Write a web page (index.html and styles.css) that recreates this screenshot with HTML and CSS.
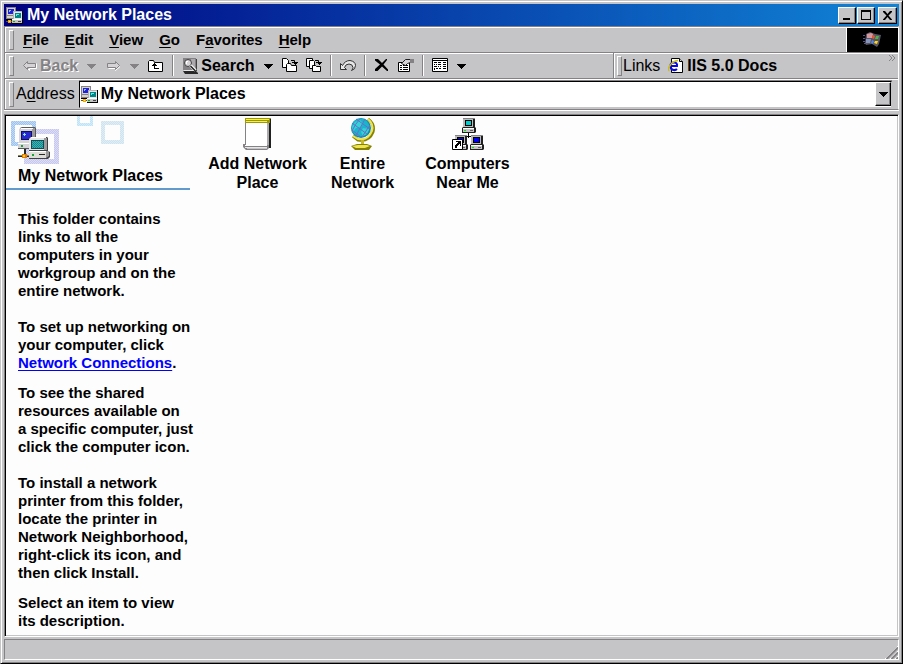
FILE: index.html
```html
<!DOCTYPE html>
<html lang="en">
<head>
<meta charset="utf-8">
<title>My Network Places</title>
<link rel="stylesheet" href="styles.css">
</head>
<body>
<svg class="defs" aria-hidden="true">
  <defs>
    <pattern id="dots" width="2" height="2" patternUnits="userSpaceOnUse">
      <path d="M0 0h1v1H0zM1 1h1v1H1z" fill="#fff" fill-opacity=".4"/>
    </pattern>
    <pattern id="teal" width="2" height="2" patternUnits="userSpaceOnUse">
      <path d="M0 0h2v2H0z" fill="#18848c"/><path d="M0 0h1v1H0zM1 1h1v1H1z" fill="#39b5b5"/>
    </pattern>
  </defs>
  <symbol id="net16" viewBox="0 0 17 17">
    <path d="M0 0h10v9H0z" fill="#848284"/><path d="M1 1h8v7H1z" fill="#d6d3ce"/>
    <path d="M2 2h6v5H2z" fill="#2121d6"/><path d="M3 3h2v1H3zM3 4h1v1H3z" fill="#8cc6ff"/>
    <path d="M0 9h8v4H0z" fill="#848284"/><path d="M1 9h6v2H1z" fill="#d6d3ce"/><path d="M0 12h7v1H0z" fill="#000"/>
    <path d="M0 14h7v1H0z" fill="#636100"/><path d="M2 13h3v3H2z" fill="#ffa500"/><path d="M3 14h1v1H3z" fill="#ffef63"/>
    <path d="M7 4h10v9H7z" fill="#000"/><path d="M7 4h9v8H7z" fill="#b5b2b5"/><path d="M8 5h8v7H8z" fill="#e7e7e7"/>
    <path d="M9 6h6v5H9z" fill="#008484"/><path d="M10 7h3v1h-3zM10 8h1v1h-1z" fill="#63e7e7"/>
    <path d="M6 12h11v5H6z" fill="#000"/><path d="M6 12h10v4H6z" fill="#c6c3c6"/><path d="M6 12h10v1H6z" fill="#fff"/>
    <path d="M7 14h2v1H7z" fill="#00b500"/><path d="M12 14h3v1h-3z" fill="#424142"/>
  </symbol>
  <symbol id="down" viewBox="0 0 11 16">
    <path d="M1 6h9v1H1zM2 7h7v1H2zM3 8h5v1H3zM4 9h3v1H4zM5 10h1v1H5z" fill="currentColor"/>
  </symbol>
  <symbol id="pc" viewBox="0 0 14 15">
    <path d="M1 0h11l1 1v8l1 1v4l-1 1H0v-5l1-1z" fill="#212021"/>
    <path d="M1 1h10v8H1z" fill="#bdbabd"/><path d="M1 0h11v1H1z" fill="#848284"/>
    <path d="M1 10h11v4H1z" fill="#c6c3c6"/><path d="M1 10h11v1H1z" fill="#fff"/>
    <path d="M3 2h7v6H3z" fill="#000"/><path d="M4 3h5v4H4z" fill="currentColor"/>
    <path d="M2 12h2v1H2z" fill="#00e700"/><path d="M8 12h3v1H8z" fill="#636163"/>
  </symbol>
</svg>

<div class="window">
  <header class="titlebar">
    <svg class="icon net" aria-hidden="true"><use href="#net16"/></svg>
    <h1>My Network Places</h1>
    <div class="controls">
      <button type="button" aria-label="Minimize"><svg viewBox="0 0 16 14"><path d="M4 10h7v2H4z"/></svg></button>
      <button type="button" aria-label="Maximize"><svg viewBox="0 0 16 14"><path d="M3 2h10v10H3zM4 4v7h8V4z" fill-rule="evenodd"/></svg></button>
      <button type="button" class="close" aria-label="Close"><svg viewBox="0 0 16 14"><path d="M4 3h2l2.500 3L11 3h2v1L9.500 7.500l3.500 4v.500h-2L8.500 9 6 12H4v-.500l3.500-4L4 4z"/></svg></button>
    </div>
  </header>

  <div class="rebar">
    <div class="band menuband">
      <nav class="menu grip" aria-label="Menu">
        <button type="button"><u>F</u>ile</button>
        <button type="button"><u>E</u>dit</button>
        <button type="button"><u>V</u>iew</button>
        <button type="button"><u>G</u>o</button>
        <button type="button">F<u>a</u>vorites</button>
        <button type="button"><u>H</u>elp</button>
      </nav>
      <div class="brand">
        <svg viewBox="0 0 20 18" aria-hidden="true">
          <path d="M0 4h2v1H0zM0 7h2v1H0zM0 10h2v1H0zM1 12h3v1H1z" fill="#52519c"/>
          <path d="M3 3l4-2 5 2 6 1-2 9-2 3-5-3-6 1-1-2z" fill="#5a5563"/>
          <path d="M4 3l4-1 2 1-1 4-5 0z" fill="#d69a9c"/><path d="M3 8h5l-1 4-4 0z" fill="#8496bd"/>
          <path d="M10 4l2 1-1 3-2-1z" fill="#f75129"/><path d="M13 5h3l-1 3-3 0z" fill="#4ab54a"/>
          <path d="M9 9l2 1-1 3-2-1z" fill="#4a86e7"/><path d="M12 10l3 0-1 3-3-1z" fill="#ffd718"/>
        </svg>
      </div>
    </div>

    <div class="band">
      <div class="toolbar grip">
        <button type="button" class="tool" disabled>
          <svg class="arrow" viewBox="0 0 14 16" aria-hidden="true"><path d="M2.500 8.500l4 4v-2h7v-5" fill="none" stroke="#fff"/><path d="M.5 7.500l4-4v2h8v4h-8v2z" fill="#d6d3d6" stroke="#848284"/></svg>
          <span>Back</span>
        </button>
        <button type="button" class="tool" disabled aria-label="Back list"><svg class="down"><use href="#down"/></svg></button>
        <button type="button" class="tool" disabled aria-label="Forward"><svg class="icon" viewBox="0 0 16 16"><path d="M15 8.500l-4.500 4v-2h-7" fill="none" stroke="#fff"/><path d="M14.500 7.500l-4-4v2h-8v4h8v2z" fill="#d6d3d6" stroke="#848284"/></svg></button>
        <button type="button" class="tool" disabled aria-label="Forward list"><svg class="down"><use href="#down"/></svg></button>
        <button type="button" class="tool" aria-label="Up"><svg class="icon" viewBox="0 0 16 16"><path d="M.5 13.500v-10l1-1h4l1 2h8v9z" fill="#fff" stroke="#000"/><path d="M6 5h1v1h1v1h1v1H7v2h4v1H6V8H4V7h1V6h1z"/></svg></button>
        <span class="sep"></span>
        <button type="button" class="tool">
          <svg class="icon" viewBox="0 0 16 16" aria-hidden="true"><path d="M1 0h13v12H1z" fill="#848284"/><path d="M9 1h4v10H9z" fill="#adaaad"/><path d="M14 1h1v12h-1zM2 12h3v1H2z" fill="#424142"/><path d="M1 13h13l2 2v1H3z" fill="#292829"/><path d="M2 12h10v1H2z" fill="#e7e7e7"/><circle cx="6" cy="5" r="3.500" fill="#d6d3d6" stroke="#424142"/><path d="M4 3h2v1H4zM4 4h1v2H4z" fill="#fff"/><path d="M8.500 7.500l5 5" stroke="#fff" stroke-width="3"/><path d="M8.500 8l5 5" stroke="#212021" stroke-width="1.500"/></svg>
          <span>Search</span>
        </button>
        <button type="button" class="tool" aria-label="Search list"><svg class="down"><use href="#down"/></svg></button>
        <button type="button" class="tool" aria-label="Move To"><svg class="icon" viewBox="0 0 16 16"><path d="M.5.500h4l2 2v7h-6z" fill="#fff" stroke="#000"/><path d="M4.500 13.500v-7l1-1h3l1 2h5v6z" fill="#fff" stroke="#000"/><path d="M9 2.500h3.500v2" fill="none" stroke="#000"/><path d="M10 4h6v1h-1v1h-1v1h-1V6h-1V5h-2z"/></svg></button>
        <button type="button" class="tool" aria-label="Copy To"><svg class="icon" viewBox="0 0 16 16"><path d="M.5.500h6v8h-6z" fill="#fff" stroke="#000"/><path d="M3.500 2.500h4l1 1v7h-5z" fill="#fff" stroke="#000"/><path d="M6.500 13.500v-6h3l1 1h4v5z" fill="#fff" stroke="#000"/><path d="M9 2.500h3.500v2" fill="none" stroke="#000"/><path d="M10 4h6v1h-1v1h-1v1h-1V6h-1V5h-2z"/></svg></button>
        <span class="sep"></span>
        <button type="button" class="tool" aria-label="Undo"><svg class="icon" viewBox="0 0 16 16"><path d="M.5 5.500v6h6L4.500 9.500q1-3.500 4.500-3.500t4 3.500q0 1.500-1.500 3 4-1 4-5T10 2.500Q5 2.500 2.500 7.500z" fill="#e7e7e7" stroke="#313031"/></svg></button>
        <span class="sep"></span>
        <button type="button" class="tool" aria-label="Delete"><svg class="icon" viewBox="0 0 16 16"><path d="M1 1h3l4 4 4-4h1v1L9.500 6.500l4.500 5v1.500h-1L8 8.500 3.500 13H1v-2l5-4.500-5-4z"/></svg></button>
        <button type="button" class="tool" aria-label="Properties"><svg class="icon" viewBox="0 0 16 16"><path d="M.5 4.500h11v9H.500z" fill="#fff" stroke="#000"/><path d="M2 7h2v1H2zM5 7h5v1H5zM2 9h2v1H2zM5 9h5v1H5zM2 11h2v1H2zM5 11h5v1H5z"/><path d="M3.500 5.500l4-4h5v3l-3 1-2 2z" fill="#d6d3d6" stroke="#212021"/><path d="M12 1h4v4h-4z" fill="#848284"/></svg></button>
        <span class="sep"></span>
        <button type="button" class="tool" aria-label="Views"><svg class="icon" viewBox="0 0 16 16"><path d="M.5.500h15v13H.500z" fill="#fff" stroke="#000"/><path d="M1 2h14v1H1z"/><path d="M2 4h3v1H2zM6 4h3v1H6zM11 4h3v1h-3zM2 6h1v1H2zM4 6h1v1H4zM6 6h3v1H6zM11 6h3v1h-3zM2 8h3v1H2zM6 8h1v1H6zM8 8h1v1H8zM11 8h3v1h-3zM2 10h1v2H2zM4 10h2v1H4zM7 10h2v1H7zM11 10h3v1h-3z"/></svg></button>
        <button type="button" class="tool" aria-label="Views list"><svg class="down"><use href="#down"/></svg></button>
      </div>
      <div class="links grip">
        <span>Links</span>
        <a href="#iis">
          <svg class="icon" viewBox="0 0 16 16" aria-hidden="true"><path d="M3.500.500h8l3 3v11h-11z" fill="#fff" stroke="#000"/><path d="M11.500.500v3h3" fill="#d6d3d6" stroke="#000"/><path d="M9 11Q7.500 12.500 5.500 12 2.500 11.500 2.500 8T6 4.500 9 8H3.500" fill="none" stroke="#0808de" stroke-width="2"/><path d="M1.500 12.500Q-1 12 2 7.500T10 2.500" fill="none" stroke="#cebe10" stroke-width="1.500"/></svg>
          IIS 5.0 Docs
        </a>
        <svg class="more" viewBox="0 0 8 7" aria-hidden="true"><path d="M1 0l3 3-3 3M4 0l3 3-3 3" fill="none" stroke="#848284"/></svg>
      </div>
    </div>

    <div class="band addressband">
      <div class="address grip">
        <label for="addr">A<u>d</u>dress</label>
        <div class="combo">
          <svg class="icon net" aria-hidden="true"><use href="#net16"/></svg>
          <input id="addr" type="text" value="My Network Places">
          <button type="button" aria-label="Show addresses"><svg class="down"><use href="#down"/></svg></button>
        </div>
      </div>
    </div>
  </div>

  <main class="client">
    <aside class="info">
      <div class="banner">
        <svg class="art" viewBox="0 0 184 50" aria-hidden="true">
          <g fill="none">
            <path d="M7 7h21v21H7z" stroke="#9cc3ef" stroke-width="4"/>
            <path d="M20.500 15.500h30v30h-30z" stroke="#c6c7ef" stroke-width="5"/>
            <path d="M72.500-4v12.500h13V-4" stroke="#bde3f7" stroke-width="3"/>
            <path d="M97 7h19v19H97z" stroke="#cee3ef" stroke-width="4"/>
            <g stroke="url(#dots)"><path d="M7 7h21v21H7zM97 7h19v19H97z" stroke-width="4"/><path d="M20.500 15.500h30v30h-30z" stroke-width="5"/><path d="M72.500-4v12.500h13V-4" stroke-width="3"/></g>
          </g>
          <g transform="translate(12 11)">
            <path d="M2 1l2-1h13l1 1v15h-2v6H0v-5l2-2z" fill="#5a595a"/>
            <path d="M1 2l2-1h11v15H1z" fill="#d6d3d6"/><path d="M14 1h3v14h-3z" fill="#9c9a9c"/><path d="M3 1h12v1H3z" fill="#fff"/>
            <path d="M3 4h11v9H3z" fill="#101063"/><path d="M4 5h9v7H4z" fill="#2928ce"/><path d="M6 6h1v3H6zM5 7h3v1H5z" fill="#8cdfff"/>
            <path d="M0 17h13v4H0z" fill="#d6d3d6"/><path d="M0 16h12v1H0z" fill="#fff"/><path d="M3 18h2v2H3z" fill="#18a639"/>
            <path d="M6 22h2v5H6zM0 29h12v1H0z" fill="#292829"/><path d="M0 28h12v1H0z" fill="#8c8a52"/><path d="M4 27h5v4H4z" fill="#e77900"/><path d="M5 28h2v2H5z" fill="#ffcf39"/>
            <path d="M11 11l2-1h16l1 1v13l2 1v5l-2 2H11z" fill="#424142"/>
            <path d="M11 12l2-2h13v13H11z" fill="#e7e7e7"/><path d="M26 11h3v12h-3z" fill="#9c9a9c"/><path d="M13 10h15v1H13z" fill="#fff"/>
            <path d="M13 13h13v9H13z" fill="#104d52"/><path d="M14 14h11v7H14z" fill="url(#teal)"/>
            <path d="M11 24h17v7H11z" fill="#deded6"/><path d="M28 24h3v5l-3 2z" fill="#9c9a9c"/><path d="M11 24h17v1H11z" fill="#fff"/>
            <path d="M14 27h2v2h-2z" fill="#18a639"/><path d="M21 27h6v1h-6z" fill="#292829"/>
          </g>
        </svg>
        <h2>My Network Places</h2>
      </div>
      <div class="text">
        <p>This folder contains<br>links to all the<br>computers in your<br>workgroup and on the<br>entire network.<br><br>To set up networking on<br>your computer, click<br><a href="#connections">Network Connections</a>.</p>
        <p>To see the shared<br>resources available on<br>a specific computer, just<br>click the computer icon.<br><br>To install a network<br>printer from this folder,<br>locate the printer in<br>Network Neighborhood,<br>right-click its icon, and<br>then click Install.</p>
        <p>Select an item to view<br>its description.</p>
      </div>
    </aside>
    <ul class="items">
      <li>
        <svg viewBox="0 0 32 32" aria-hidden="true">
          <path d="M3 0h26v30H3z" fill="#848284"/><path d="M27 1h2v29h-2z" fill="#212021"/>
          <path d="M4 4h21v24H4z" fill="#fff"/><path d="M3 0h25v5H3z" fill="#9c9a00"/><path d="M4 1h23v1H4zM4 3h21v1H4z" fill="#f7ef52"/>
          <path d="M25 5h2v22h-2z" fill="#adaaad"/><path d="M1 26h2v1h24v3l-2 2H4l-3-3z" fill="#848284"/><path d="M3 27h22v1H3z" fill="#fff"/><path d="M3 29h22v1H3z" fill="#e7e7e7"/><path d="M5 30h20v1H5z" fill="#c6c3c6"/>
        </svg>
        <span>Add Network<br>Place</span>
      </li>
      <li>
        <svg viewBox="0 0 32 32" aria-hidden="true">
          <path d="M21 1Q28 6 26 14 22 24 11 22L6 18" fill="none" stroke="#848200" stroke-width="3"/><path d="M21 1Q27 6 25 13 21 23 11 21L6 18" fill="none" stroke="#efe352" stroke-width="2"/>
          <circle cx="14" cy="10" r="10" fill="#108aa5"/><circle cx="13.500" cy="9.500" r="9" fill="#18b6ce"/>
          <path d="M8 4l5-2 3 3-2 4-5 1-3 4-1-5zM16 10l6 1-2 5-4 2-2-4z" fill="#31d3d6"/>
          <path d="M5 5l15 11M9 1l14 10M5 12l9 7M9 18Q13 10 18 1M5 13Q8 6 13 1M15 19l8-12" fill="none" stroke="#6b6dc6"/>
          <path d="M14 22h3v5h-3z" fill="#c6b629"/><path d="M4 28l6-2h10l5 2-3 4H8z" fill="#848200"/><path d="M5 28l6-1h9l3 1-5 2H9z" fill="#efe352"/>
        </svg>
        <span>Entire<br>Network</span>
      </li>
      <li>
        <svg viewBox="0 0 32 32" aria-hidden="true">
          <path d="M16 14h1v4h6v1h-6v1h-1v-1h-6v-1h6z" fill="#000"/>
          <use class="cyan" href="#pc" x="10" y="0" width="14" height="15"/>
          <use class="blue" href="#pc" x="2" y="17" width="14" height="15"/>
          <use class="blue" href="#pc" x="18" y="17" width="14" height="15"/>
          <path d="M.5 21.500h10v10H.500z" fill="#fff" stroke="#000"/><path d="M4 23h5v5H8v-2H7v1H6v1H5v2H3v-3h1v-1h1v-1h1v-1H4z"/>
        </svg>
        <span>Computers<br>Near Me</span>
      </li>
    </ul>
  </main>

  <footer class="status">
    <svg viewBox="0 0 14 14" aria-hidden="true"><path d="M1 14L14 1M6 14l8-8M11 14l3-3" stroke="#fff"/><path d="M2.500 14L14 2.500M7.500 14L14 7.500M12.500 14l1.500-1.500" stroke="#848284" stroke-width="2"/></svg>
  </footer>
</div>
</body>
</html>
```
FILE: styles.css
```css
:root {
  --face: #c5c4c7;
  --shade: #848284;
  --light: #fff;
}

* { box-sizing: border-box; }

body {
  margin: 0;
  font: bold 16px/20px "Liberation Sans", Arial, sans-serif;
  color: #000;
}

button, input {
  margin: 0;
  padding: 0;
  border: 0;
  background: none;
  color: inherit;
  font: inherit;
}

h1, h2, p, ul { margin: 0; padding: 0; font: inherit; list-style: none; }

svg { display: block; flex: none; }
u { text-underline-offset: 2px; }

.defs { position: absolute; width: 0; height: 0; }
.icon { width: 16px; height: 16px; }
.icon.net { width: 17px; height: 17px; }
.down { width: 11px; height: 16px; }

.window {
  display: flex;
  flex-direction: column;
  min-height: 100vh;
  padding: 2px;
  background: var(--face);
  border: 1px solid;
  border-color: var(--face) #000 #000 var(--face);
  box-shadow: inset 1px 1px var(--light), inset -1px -1px var(--shade);
}

.titlebar {
  display: flex;
  align-items: center;
  gap: 4px;
  height: 22px;
  margin: 1px 1px 0;
  padding: 0 2px;
  background: linear-gradient(90deg, #000080, #1084d6);
  color: #fff;
}
.titlebar h1 { flex: 1; }
.controls { display: flex; }
.controls button {
  width: 18px;
  height: 17px;
  background: var(--face);
  border: 1px solid;
  border-color: #fff #000 #000 #fff;
  box-shadow: inset -1px -1px var(--shade);
}
.controls svg { width: 16px; height: 14px; }
.controls button + button { margin-left: 1px; }
.controls .close { margin-left: 3px; width: 19px; }

.rebar {
  margin: 0 1px;
  border: 1px solid var(--shade);
  border-right-color: var(--light);
  box-shadow: 0 1px var(--light);
}
.band {
  display: flex;
  height: 26px;
  border-bottom: 1px solid var(--shade);
  box-shadow: inset 1px 1px var(--light);
}
.addressband { height: 30px; border-bottom: 0; }

.grip { display: flex; align-items: center; padding-left: 18px; position: relative; }
.grip::before {
  content: "";
  position: absolute;
  left: 4px;
  top: 3px;
  bottom: 2px;
  width: 3px;
  border: 1px solid;
  border-color: var(--light) var(--shade) var(--shade) var(--light);
}

.menu { flex: 1; gap: 16px; font-size: 15px; }
.brand {
  display: flex;
  align-items: center;
  justify-content: center;
  width: 52px;
  margin-top: 1px;
  background: #000;
  border-left: 1px solid var(--light);
}
.brand svg { width: 20px; height: 18px; }

.toolbar { flex: 1; gap: 8px; }
.tool { display: flex; align-items: center; gap: 3px; }
.tool:disabled { color: var(--shade); text-shadow: 1px 1px #fff; }
.arrow { width: 14px; height: 16px; }
.sep {
  width: 2px;
  height: 21px;
  border-left: 1px solid var(--shade);
  border-right: 1px solid var(--light);
}
.links {
  flex: 0 1 285px;
  gap: 8px;
  padding-left: 9px;
  border-left: 1px solid var(--shade);
  box-shadow: inset 1px 1px var(--light);
}
.links::before { left: 3px; }
.links span, .address label { font-weight: normal; }
.links a { display: flex; align-items: center; gap: 3px; color: inherit; text-decoration: none; white-space: nowrap; }
.more { width: 8px; height: 7px; margin: 2px 2px 0 auto; align-self: flex-start; }

.address { flex: 1; gap: 4px; padding-left: 11px; }
.combo {
  display: flex;
  flex: 1;
  align-items: center;
  gap: 3px;
  height: 27px;
  margin-right: 6px;
  padding-left: 1px;
  background: #fff;
  border: 1px solid;
  border-color: #000 var(--face) var(--face) #000;
  box-shadow: 0 -1px var(--shade);
}
.combo input { flex: 1; min-width: 0; outline: 0; }
.combo button {
  display: flex;
  align-items: center;
  justify-content: center;
  width: 16px;
  height: 24px;
  background: var(--face);
  border: 1px solid;
  border-color: #fff #000 #000 #fff;
  box-shadow: inset -1px -1px var(--shade);
}

.client {
  display: flex;
  flex: 1;
  margin: 4px 1px 0;
  background: #fdfdfd;
  border: 1px solid;
  border-color: var(--shade) var(--light) var(--light) var(--shade);
  box-shadow: inset 1px 1px #000, inset -1px -1px var(--face);
  padding: 1px;
}
.info { width: 184px; white-space: nowrap; }
.banner { border-bottom: 2px solid #639ace; }
.art { width: 184px; height: 50px; }
.banner h2 { padding: 0 0 2px 12px; }
.text {
  display: grid;
  gap: 12px;
  padding: 20px 0 5px 12px;
  font-size: 15px;
  line-height: 18px;
}
.text a { color: #00f; text-underline-offset: 2px; }

.items { display: flex; flex-wrap: wrap; align-content: flex-start; flex: 1; padding: 2px 15px; }
.items li {
  display: flex;
  flex-direction: column;
  align-items: center;
  gap: 4px;
  width: 105px;
  line-height: 19px;
  text-align: center;
}
.items svg { width: 32px; height: 32px; }
.cyan { color: #00cece; }
.blue { color: #0000f7; }

.status {
  display: flex;
  align-items: flex-end;
  justify-content: flex-end;
  height: 21px;
  margin: 2px 1px 1px;
  border: 1px solid;
  border-color: var(--shade) var(--light) var(--light) var(--shade);
}
.status svg { width: 14px; height: 14px; }
```
